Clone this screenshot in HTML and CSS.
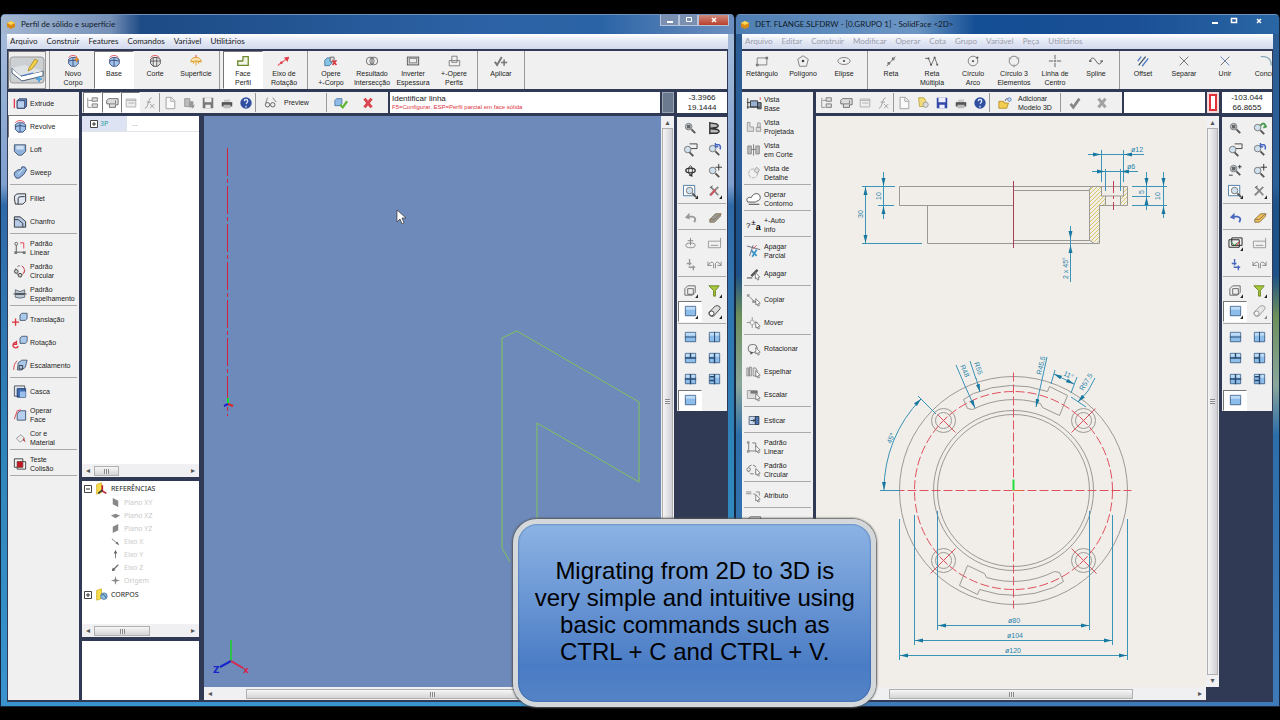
FILE: index.html
```html
<!DOCTYPE html>
<html lang="pt-BR">
<head>
  <meta charset="UTF-8" />
  <meta name="viewport" content="width=device-width, initial-scale=1.0" />
  <title>SolidFace</title>
  <link rel="stylesheet" href="styles.css">
</head>
<body>
  <svg class="sprite" aria-hidden="true">
    <!-- solid features -->
    <symbol id="body" viewBox="0 0 16 16"><path d="M3 6l3-2h5l3 2v5l-3 3H6l-3-3z" fill="#9fc3ec" stroke="#3b4c74"/><path d="M8 5v9M3 8l5-1 6 1" fill="none" stroke="#3b4c74"/><path d="M3 4c2-3 8-3 10 0" fill="none" stroke="#e0404e"/></symbol>
    <symbol id="newbody" viewBox="0 0 16 16"><use href="#body"/><path d="M12 3l1 2 2 1-2 1-1 3-1-3-2-1 2-1z" fill="#ee8e25"/></symbol>
    <symbol id="cut" viewBox="0 0 16 16"><path d="M3 6l3-2h5l3 2v5l-3 3H6l-3-3z" fill="#e8e8ea" stroke="#444"/><path d="M6 4v10M10 4v10M3 8h11" fill="none" stroke="#555"/><path d="M3 4c2-3 8-3 10 0" fill="none" stroke="#e0404e"/></symbol>
    <symbol id="surface" viewBox="0 0 16 16"><path d="M2 9c0-7 12-7 12 0l-3-1v3M8 8v5M5 8v3M2 9l6-1 6 1" fill="#fbe3b0" stroke="#d99a2b"/><path d="M8 1v3" stroke="#e0404e"/></symbol>
    <symbol id="face" viewBox="0 0 16 16"><path d="M8 3h6v10H2V8h5q1 0 1-1z" fill="#f3f6e6" stroke="#6f8b2e" stroke-width="1.5"/></symbol>
    <symbol id="axis" viewBox="0 0 16 16"><path d="M1 13L13 4" stroke="#e77" stroke-width="1.5"/><path d="M14 3L8 4l4 5z" fill="#e03b48"/><circle cx="5" cy="10" r="1.5" fill="#e03b48"/></symbol>
    <symbol id="opbody" viewBox="0 0 18 16"><path d="M1 7l3-3h6v7l-3 3H1z" fill="#86c3e4" stroke="#3b6a94"/><path d="M8 3h5v6H8z" fill="#ddd" stroke="#555"/><path d="M11 7l5 6m0-6l-5 6" stroke="#d9343f" stroke-width="2"/></symbol>
    <symbol id="inter" viewBox="0 0 16 16"><circle cx="6" cy="8" r="4.500" fill="none" stroke="#666"/><circle cx="10" cy="8" r="4.500" fill="none" stroke="#666"/><path d="M8 4v8" stroke="#444"/></symbol>
    <symbol id="thick" viewBox="0 0 16 16"><rect x="1.500" y="3.500" width="13" height="9" fill="#ccc" stroke="#555"/><rect x="4" y="5" width="8" height="5" fill="#eee" stroke="#888"/></symbol>
    <symbol id="opperf" viewBox="0 0 16 16"><path d="M5.500 2.500h6v7h-6z M2.500 7.500h12v6h-12z" fill="none" stroke="#777"/></symbol>
    <symbol id="apply" viewBox="0 0 18 16"><path d="M1 9l3 4 6-10" fill="none" stroke="#777" stroke-width="2.500"/><path d="M13 6v8M9 10h8" stroke="#777" stroke-width="2"/></symbol>
    <symbol id="extrude" viewBox="0 0 16 16"><path d="M5 5l2-2h8v8l-2 2H5z" fill="#6f8fc4" stroke="#33456d"/><path d="M5 5h8v8H5z" fill="#b6d0f0" stroke="#33456d"/><path d="M2 13V3" stroke="#e0404e" stroke-width="1.500"/></symbol>
    <symbol id="loft" viewBox="0 0 16 16"><path d="M2 3h12v7l-4 4H6l-4-4z" fill="#8fb2da" stroke="#4a5872"/><path d="M4 4h8v4H4z" fill="#cfe0f4"/></symbol>
    <symbol id="sweep" viewBox="0 0 16 16"><path d="M2 8l4-3h3l1-3h3l2 3-3 5-5 4H4l-2-3z" fill="#8fb2da" stroke="#3b4c74"/><path d="M6 10l5-6" stroke="#e0eefb"/></symbol>
    <symbol id="fillet" viewBox="0 0 16 16"><path d="M2 8c0-5 3-5 6-5h6v8l-3 3H3z" fill="#dfe8f4" stroke="#333"/><path d="M6 14V8q0-2 3-2h4" fill="none" stroke="#333"/></symbol>
    <symbol id="chamfer" viewBox="0 0 16 16"><path d="M2 3h6l6 5v6H2z" fill="#b7cbe8" stroke="#333"/><path d="M2 6h4l5 4v4" fill="none" stroke="#333"/></symbol>
    <symbol id="plin" viewBox="0 0 16 16"><path d="M4 5v8h8" fill="none" stroke="#555"/><path d="M8 3h4v6" fill="none" stroke="#e0404e"/><path d="M2 12h3v3H2zM11 12h3v3h-3z" fill="#777"/><circle cx="4" cy="4" r="1.500" fill="#fff" stroke="#555"/></symbol>
    <symbol id="pcir" viewBox="0 0 16 16"><circle cx="8" cy="8" r="5" fill="none" stroke="#777" stroke-dasharray="3 2"/><path d="M10 3q5 4 1 9" fill="none" stroke="#e0404e"/><circle cx="4" cy="9" r="2" fill="#ccc" stroke="#444"/><circle cx="8" cy="13" r="2" fill="#ccc" stroke="#444"/></symbol>
    <symbol id="pmir" viewBox="0 0 16 16"><path d="M3 4l5 2 5-2v4H3zM3 9h10v3l-5 1-5-1z" fill="#b9c7d6" stroke="#66707c"/><path d="M1 8.500h14" stroke="#333"/></symbol>
    <symbol id="move3" viewBox="0 0 18 16"><path d="M9 3l2-2h6v6l-2 2H9z" fill="#a9c8ea" stroke="#4a5872"/><path d="M4 7v8M0 11h8" stroke="#d9343f" stroke-width="1.500"/></symbol>
    <symbol id="rot3" viewBox="0 0 18 16"><path d="M9 3l2-2h6v6l-2 2H9z" fill="#a9c8ea" stroke="#4a5872"/><path d="M5 8a3 3 0 1 0 2 4M5 6v4H2" fill="none" stroke="#d9343f" stroke-width="1.500"/></symbol>
    <symbol id="scale3" viewBox="0 0 18 16"><path d="M7 5l4-3h6l-2 8-4 3H6z" fill="#a9c8ea" stroke="#4a5872"/><path d="M8 8h4v4H8z" fill="none" stroke="#333"/><path d="M2 13q0-8 4-10" fill="none" stroke="#d9343f"/></symbol>
    <symbol id="shell" viewBox="0 0 16 16"><path d="M2 2h11v11H2z" fill="#d9e3f2" stroke="#555"/><path d="M5 5h9v9H5z" fill="#3f6fb4" stroke="#223a66"/><path d="M8 8h6v6H8z" fill="#9cc0ec"/></symbol>
    <symbol id="opface" viewBox="0 0 16 16"><path d="M5 14V8q1-4 4-4h5v10z" fill="#b8d0f0" stroke="#4a5872"/><path d="M2 13L5 4l4-1" fill="none" stroke="#e0404e"/></symbol>
    <symbol id="color" viewBox="0 0 16 16"><path d="M4 9l5-4 4 4-5 4z" fill="#ececec" stroke="#999"/><path d="M12 8l2 5-3-2z" fill="#b03a44"/></symbol>
    <symbol id="collide" viewBox="0 0 16 16"><path d="M2 3h9v9H2zM5 6h9v8H5z" fill="none" stroke="#444"/><path d="M5 6h6v6H5z" fill="#c01822"/></symbol>
    <!-- 2D drawing -->
    <symbol id="arrow" viewBox="0 0 16 16"><path d="M10 7l5 5-2 .500 1 2.500-1.500.500-1-2.500-1.500 1z" fill="#fff" stroke="#777"/></symbol>
    <symbol id="rect" viewBox="0 0 16 16"><path d="M2.500 4.500h11v8h-11z" fill="none" stroke="#777"/><path d="M1 11h3v3H1zM12 3h3v3h-3z" fill="#777"/></symbol>
    <symbol id="poly" viewBox="0 0 16 16"><path d="M8 2l6 4-2 8H4L2 6z" fill="none" stroke="#777"/><circle cx="8" cy="8" r="1.500" fill="#444"/></symbol>
    <symbol id="ell" viewBox="0 0 16 16"><ellipse cx="8" cy="8" rx="7" ry="4" fill="none" stroke="#777"/><circle cx="8" cy="8" r="1.200" fill="#444"/></symbol>
    <symbol id="line" viewBox="0 0 16 16"><path d="M3 14L13 3" stroke="#666"/><path d="M4 9h3v3H4zM9 4h3v3H9z" fill="#777"/></symbol>
    <symbol id="pline" viewBox="0 0 16 16"><path d="M0 5h4l3 8 4-9 3 8" fill="none" stroke="#666"/><path d="M3 4h2v2H3zM10 3h2v2h-2zM6 11h2v2H6zM13 11h2v2h-2z" fill="#555"/></symbol>
    <symbol id="circ" viewBox="0 0 16 16"><circle cx="8" cy="8" r="5.500" fill="none" stroke="#777"/><path d="M7 7h2v2H7zM12 3h2v2h-2z" fill="#444"/></symbol>
    <symbol id="circ3" viewBox="0 0 16 16"><circle cx="8" cy="8" r="5.500" fill="none" stroke="#777"/><path d="M2 4h3v2H2zM11 4h3v2h-3zM7 12h2v3H7z" fill="#aaa"/></symbol>
    <symbol id="center" viewBox="0 0 16 16"><path d="M8 1v14M1 8h14" stroke="#555" stroke-dasharray="5 1 2 1"/></symbol>
    <symbol id="spline" viewBox="0 0 16 16"><path d="M1 8q3-7 7 0t7 0" fill="none" stroke="#555"/><path d="M0 7h3v2H0zM13 7h3v2h-3z" fill="#777"/></symbol>
    <symbol id="offset" viewBox="0 0 16 16"><path d="M3 13L11 3" stroke="#456" stroke-width="1.500"/><path d="M7 14l7-9M2 8l4-5" stroke="#4b7cc6" stroke-width="1.500"/></symbol>
    <symbol id="cross" viewBox="0 0 16 16"><path d="M3 3l10 10M13 3L3 13" stroke="#666"/></symbol>
    <symbol id="join" viewBox="0 0 16 16"><path d="M3 3l10 10" stroke="#4b7cc6"/><path d="M13 3L3 13" stroke="#666"/></symbol>
    <symbol id="concord" viewBox="0 0 16 16"><path d="M2 3h4q8 1 8 10" fill="none" stroke="#8ab" stroke-width="1.500"/></symbol>
    <symbol id="vbase" viewBox="0 0 18 16"><path d="M2 2v12M1 7h4M5 5h8v7H5z" fill="#9ab0d0" stroke="#333"/><path d="M13 7h4v7h-4zM1 12h15" fill="#789" stroke="#333"/><path d="M16 1v3" stroke="#e0404e"/></symbol>
    <symbol id="vproj" viewBox="0 0 18 16"><path d="M1.500 3.500h3v5h4v5h-7zM11.500 9h5v4.500h-5zM13 4h3v5h-3z" fill="#ddd" stroke="#999"/></symbol>
    <symbol id="vcut" viewBox="0 0 18 16"><path d="M2 4h4v9H2zM11 4h4v9h-4z" fill="#bbb" stroke="#888"/><path d="M8.500 2v13M6 8h5" stroke="#777"/></symbol>
    <symbol id="vdet" viewBox="0 0 18 16"><circle cx="8" cy="9" r="5" fill="none" stroke="#aaa" stroke-dasharray="4 1"/><path d="M9 6l3-4 3 3-2 4z" fill="#ddd" stroke="#999"/></symbol>
    <symbol id="contour" viewBox="0 0 18 16"><path d="M2 12c-3-4 1-6 4-5 2-6 10-6 10 0 0 4-4 3-5 5z" fill="#fff" stroke="#444"/><path d="M3 14.500h12" stroke="#333"/></symbol>
    <symbol id="partial" viewBox="0 0 18 16"><path d="M1 3l15 4M4 14l4-12" stroke="#667"/><path d="M6 8l6 6M12 7l-5 8" stroke="#3b93c8" stroke-width="2"/><path d="M8 6l4-4" stroke="#e0404e"/></symbol>
    <symbol id="erase" viewBox="0 0 18 16"><path d="M5 10l7-7 2 2-7 7z" fill="#555"/><path d="M1 13h6" stroke="#333"/><use href="#arrow" width="17" height="16"/></symbol>
    <symbol id="copy2" viewBox="0 0 18 16"><path d="M1 2h3v3H1zM7 9h5v3H7z" fill="#999"/><path d="M4 5l5 5" stroke="#777"/><use href="#arrow" width="18" height="16"/></symbol>
    <symbol id="move2" viewBox="0 0 18 16"><path d="M7 2v12M1 8h12" stroke="#888"/><path d="M5 6h4v4H5z" fill="#fff" stroke="#aaa"/><use href="#arrow" width="18" height="16"/></symbol>
    <symbol id="rot2" viewBox="0 0 18 16"><rect x="2.500" y="3.500" width="10" height="9" rx="4" fill="none" stroke="#666"/><path d="M5 11l3 2-3 2z" fill="#555"/><use href="#arrow" width="18" height="16"/></symbol>
    <symbol id="mir2" viewBox="0 0 18 16"><path d="M1 4h2v9H1zM4 3h2v10H4zM8 4h3l2 4v5H8z" fill="#ddd" stroke="#888"/><use href="#arrow" width="18" height="16"/></symbol>
    <symbol id="scale2" viewBox="0 0 18 16"><path d="M1.500 3.500h11v9h-11z" fill="#ddd" stroke="#999"/><path d="M5 4h8v3H5z" fill="#777"/><use href="#arrow" width="18" height="16"/></symbol>
    <symbol id="stretch" viewBox="0 0 18 16"><path d="M3.500 3.500h7v9h-7z" fill="#cfdcf0" stroke="#567"/><path d="M10.500 3.500h4v9h-4z" fill="#4b74b8" stroke="#234"/><path d="M5 8h5M8 6l2 2-2 2" fill="none" stroke="#234"/></symbol>
    <symbol id="plin2" viewBox="0 0 18 16"><path d="M3 4v9h9M7 4h4v5" fill="none" stroke="#777"/><path d="M1 2h3v3H1zM1 12h3v3H1z" fill="#999"/><use href="#arrow" width="18" height="16"/></symbol>
    <symbol id="pcir2" viewBox="0 0 18 16"><circle cx="7" cy="8" r="5" fill="none" stroke="#666" stroke-dasharray="4 2"/><circle cx="3" cy="8" r="2" fill="#eee" stroke="#777"/><use href="#arrow" width="18" height="16"/></symbol>
    <symbol id="attr" viewBox="0 0 18 16"><path d="M0 4h6M0 6h6M8 6l3 1M11 4h4v4" fill="none" stroke="#888"/><use href="#arrow" width="18" height="16"/></symbol>
    <!-- file bar -->
    <symbol id="tree" viewBox="0 0 16 16"><path d="M2 2v11h4M3 5h4" fill="none" stroke="#888"/><path d="M7 2h6v4H7zM7 9h6v4H7z" fill="#ddd" stroke="#777"/></symbol>
    <symbol id="group" viewBox="0 0 16 16"><path d="M4 3h11v7h-3v3H5V9H2V5z" fill="#ddd" stroke="#666"/><path d="M5 9h7V5" fill="none" stroke="#777"/></symbol>
    <symbol id="form" viewBox="0 0 16 16"><path d="M2.500 3.500h11v9h-11z" fill="#eee" stroke="#aaa"/><path d="M3 5h11M5 8h7" stroke="#aaa"/></symbol>
    <symbol id="fx" viewBox="0 0 16 16"><path d="M2 14q3 0 4-6t4-6M4 7h5M8 9l5 5M13 9l-5 5" fill="none" stroke="#999"/></symbol>
    <symbol id="new" viewBox="0 0 16 16"><path d="M3.500 1.500h6l4 4v9h-10z" fill="#fafafa" stroke="#999"/><path d="M9 2v4h4" fill="none" stroke="#999"/></symbol>
    <symbol id="open" viewBox="0 0 16 16"><path d="M3 3h6v9H3z" fill="#bbb" stroke="#999"/><path d="M8 6h5v7H8z" fill="#999"/><path d="M12 14l2-4" stroke="#777"/></symbol>
    <symbol id="openy" viewBox="0 0 16 16"><path d="M3 2h6l2 3v7H4z" fill="#f0dc7c" stroke="#bda545"/><circle cx="11" cy="10" r="3" fill="#ddd" stroke="#999"/></symbol>
    <symbol id="save" viewBox="0 0 16 16"><path d="M2 2h12v12H2z" fill="#777"/><path d="M4 2h8v5H4zM5 10h6v4H5z" fill="#eee"/></symbol>
    <symbol id="saveb" viewBox="0 0 16 16"><path d="M2 2h12v12H2z" fill="#3249a8"/><path d="M4 2h8v5H4zM5 10h6v4H5z" fill="#eef"/></symbol>
    <symbol id="print" viewBox="0 0 16 16"><path d="M5 4h7l-1 3H4z" fill="#ccc"/><path d="M2 7h12v5H2z" fill="#555"/><path d="M4 10h8v4H4z" fill="#bbb"/></symbol>
    <symbol id="help" viewBox="0 0 16 16"><circle cx="8" cy="8" r="6.500" fill="#314f9f"/><path d="M6 6q0-2 2-2t2 2q0 1-2 3M8 11v2" fill="none" stroke="#dbe6ff" stroke-width="1.500"/></symbol>
    <symbol id="glasses" viewBox="0 0 16 16"><path d="M4 2L2 8M10 2l4 5" stroke="#777"/><circle cx="4" cy="10" r="2.500" fill="none" stroke="#555"/><circle cx="10" cy="10" r="2.500" fill="none" stroke="#555"/></symbol>
    <symbol id="okbody" viewBox="0 0 16 16"><path d="M1 5l2-2h6v6l-2 2H1z" fill="#8fbbe6" stroke="#4f79a8"/><path d="M7 10l3 3 5-7" fill="none" stroke="#5fb531" stroke-width="2.500"/></symbol>
    <symbol id="no" viewBox="0 0 16 16"><path d="M4 3l8 10M12 3L4 13" stroke="currentColor" stroke-width="3.500"/></symbol>
    <symbol id="yes" viewBox="0 0 16 16"><path d="M3 9l3 4 7-10" fill="none" stroke="#858585" stroke-width="3"/></symbol>
    <symbol id="folder3d" viewBox="0 0 16 16"><path d="M1 6h5l1 2h5l-2 6H1z" fill="#f2cd4f" stroke="#b8902a"/><path d="M8 6q1-4 3-3" fill="none" stroke="#555"/><circle cx="13" cy="4" r="2" fill="#cde" stroke="#4b7cc6"/></symbol>
    <!-- view bar -->
    <symbol id="mag" viewBox="0 0 16 16"><circle cx="6" cy="6" r="3.500" fill="#cfe0ee" stroke="#777"/><path d="M9 9l4 4" stroke="#555" stroke-width="2"/></symbol>
    <symbol id="magd" viewBox="0 0 16 16"><use href="#mag"/><path d="M4 4h4v4H4z" fill="#666"/></symbol>
    <symbol id="magdyn" viewBox="0 0 16 16"><use href="#magd"/><path d="M12.500 2v4M10.500 4h4M1 13h4" stroke="#333"/></symbol>
    <symbol id="solidv" viewBox="0 0 16 16"><path d="M3 1v13M3 2l7 1q4 2 0 4l-7 1M3 8l8 1q4 2 0 4H3" fill="#bbb" stroke="#333" stroke-width="1.500"/></symbol>
    <symbol id="magw" viewBox="0 0 16 16"><path d="M7 2h8v5H8" fill="none" stroke="#444"/><circle cx="5" cy="8" r="3.500" fill="#cfe0ee" stroke="#777"/><path d="M7 11l4 4" stroke="#555" stroke-width="2"/></symbol>
    <symbol id="magu" viewBox="0 0 16 16"><use href="#mag" y="1"/><path d="M9 3h4q2 1 1 5M9 1v4h3" fill="none" stroke="#4666c4" stroke-width="1.500"/></symbol>
    <symbol id="magg" viewBox="0 0 16 16"><use href="#mag" y="1"/><path d="M9 5q2-3 4-2l2 3-3 1" fill="none" stroke="#4b9b52" stroke-width="2"/></symbol>
    <symbol id="orbit" viewBox="0 0 16 16"><ellipse cx="8" cy="8" rx="5" ry="2.500" fill="none" stroke="#333" stroke-width="1.500"/><ellipse cx="8" cy="8" rx="2" ry="5" fill="none" stroke="#333"/><path d="M6 13l4-2v4z" fill="#333"/></symbol>
    <symbol id="magp" viewBox="0 0 16 16"><use href="#mag" y="2"/><path d="M12.500 1v7M9 4.500h7" stroke="#333"/></symbol>
    <symbol id="magf" viewBox="0 0 16 16"><path d="M.500 1.500h12v11h-12z" fill="#fff" stroke="#4a7ba8"/><use href="#mag" x="1" y="1"/><path d="M16 12v4h-3z" fill="#222"/></symbol>
    <symbol id="tools" viewBox="0 0 16 16"><path d="M4 3l8 9M12 3L3 12" stroke="#888" stroke-width="2"/><path d="M3 4l3-2" stroke="#555"/><path d="M16 12v4h-3z" fill="#222"/></symbol>
    <symbol id="toolsr" viewBox="0 0 16 16"><use href="#tools"/><path d="M4 12l5-6" stroke="#d8505a" stroke-width="2"/></symbol>
    <symbol id="undo" viewBox="0 0 16 16"><path d="M4 7h6q5 1 2 6" fill="none" stroke="currentColor" stroke-width="2"/><path d="M7 3v7L2 8z" fill="currentColor"/></symbol>
    <symbol id="eraser" viewBox="0 0 16 16"><path d="M3 10l6-6h6l-1 3-6 6H3z" fill="currentColor" stroke="#8a7a55"/><path d="M3 10h5l6-6" fill="none" stroke="#8a7a55"/></symbol>
    <symbol id="plane" viewBox="0 0 16 16"><path d="M8 2v8M5 5h6" stroke="#888"/><ellipse cx="8" cy="10" rx="5" ry="2.500" fill="none" stroke="#888"/></symbol>
    <symbol id="layers" viewBox="0 0 16 16"><path d="M4 2h11v8H4zM1 4h11v8H1z" fill="#eee" stroke="#222"/><path d="M3 6l4 4 3-3" fill="none" stroke="#2a8a3a"/><path d="M9 10l3-4" stroke="#d22"/><path d="M16 12v4h-3z" fill="#222"/></symbol>
    <symbol id="dim" viewBox="0 0 16 16"><path d="M1.500 5.500h13v7h-13zM4 10h8M14.500 2v4" fill="none" stroke="#999"/></symbol>
    <symbol id="snap" viewBox="0 0 16 16"><path d="M7 2v7M4 7h5M6 11h7M11 9v5" stroke="currentColor" stroke-width="1.500"/></symbol>
    <symbol id="curves" viewBox="0 0 16 16"><path d="M1 5v4h4M1 9q4-6 6-2v5M15 5v4h-4M15 9q-4-6-6-2v5" fill="none" stroke="#888"/></symbol>
    <symbol id="wire" viewBox="0 0 16 16"><path d="M2 6l3-3h8v7l-3 3H2zM5 6h6v6H5z" fill="none" stroke="#666"/><path d="M16 12v4h-3z" fill="#222"/></symbol>
    <symbol id="funnel" viewBox="0 0 16 16"><path d="M2 3h11L9 8v6H7V8z" fill="#a9c93c" stroke="#6d8523"/><path d="M16 12v4h-3z" fill="#222"/></symbol>
    <symbol id="pane" viewBox="0 0 16 16"><path d="M2.500 2.500h11v10h-11z" fill="#8dbdeb" stroke="#44658c"/><path d="M3 3h10v3H3z" fill="#bfdcf6"/></symbol>
    <symbol id="paned" viewBox="0 0 16 16"><use href="#pane"/><path d="M16 12v4h-3z" fill="#222"/></symbol>
    <symbol id="tube" viewBox="0 0 16 16"><path d="M2 9l7-7q5-1 5 3l-7 8q-5 1-5-4z" fill="#ddd" stroke="#444"/><ellipse cx="5" cy="10" rx="2.500" ry="2.500" fill="#fff" stroke="#444"/><path d="M16 12v4h-3z" fill="#222"/></symbol>
    <symbol id="ph" viewBox="0 0 16 16"><use href="#pane"/><path d="M2 7.500h12" stroke="#27496f"/></symbol>
    <symbol id="pv" viewBox="0 0 16 16"><use href="#pane"/><path d="M8 2v11" stroke="#27496f"/></symbol>
    <symbol id="pt" viewBox="0 0 16 16"><use href="#pane"/><path d="M2 7.500h12M8 2v5" stroke="#27496f" stroke-width="1.500"/></symbol>
    <symbol id="pl" viewBox="0 0 16 16"><use href="#pane"/><path d="M8 2v11M2 7.500h6" stroke="#27496f" stroke-width="1.500"/></symbol>
    <symbol id="pq" viewBox="0 0 16 16"><use href="#pane"/><path d="M8 2v11M2 7.500h12" stroke="#27496f" stroke-width="1.500"/></symbol>
    <symbol id="ptr" viewBox="0 0 16 16"><use href="#pane"/><path d="M8 2v11M3 5h5M3 9h5" stroke="#27496f" stroke-width="1.500"/></symbol>
    <!-- tree -->
    <symbol id="plus" viewBox="0 0 8 8"><path d="M.500.500h7v7h-7z" fill="#fff" stroke="#444"/><path d="M4 2v4M2 4h4" stroke="#333"/></symbol>
    <symbol id="minus" viewBox="0 0 8 8"><path d="M.500.500h7v7h-7z" fill="#fff" stroke="#444"/><path d="M2 4h4" stroke="#333"/></symbol>
    <symbol id="fref" viewBox="0 0 16 16"><path d="M2 3l6-2v12l-6 2z" fill="#f7dd4a" stroke="#d2b12d"/><path d="M9 4v7M9 11l5 3" stroke="#b23" stroke-width="2"/><path d="M4 14l5-4" stroke="#333" stroke-width="2"/></symbol>
    <symbol id="fbody" viewBox="0 0 16 16"><path d="M2 3l6-2v12l-6 2z" fill="#f7dd4a" stroke="#d2b12d"/><circle cx="11" cy="10" r="4" fill="#8dbde8" stroke="#47759f"/><path d="M8 9q4-3 5 3" fill="none" stroke="#356"/></symbol>
    <symbol id="pxy" viewBox="0 0 12 12"><path d="M3 1l6 3v7L3 8z" fill="#888"/></symbol>
    <symbol id="pxz" viewBox="0 0 12 12"><path d="M1 6l5-2 5 2-5 3z" fill="#888"/></symbol>
    <symbol id="pyz" viewBox="0 0 12 12"><path d="M3 4l6-3v7l-6 3z" fill="#888"/></symbol>
    <symbol id="ex" viewBox="0 0 12 12"><path d="M2 3l7 6" stroke="#777"/><path d="M6 8l4 2-2-4z" fill="#666"/></symbol>
    <symbol id="ey" viewBox="0 0 12 12"><path d="M6 2v8" stroke="#777"/><path d="M4 5l2-4 2 4z" fill="#666"/></symbol>
    <symbol id="ez" viewBox="0 0 12 12"><path d="M9 3L3 9" stroke="#777" stroke-width="1.500"/><path d="M2 10l1-4 3 3z" fill="#666"/></symbol>
    <symbol id="eo" viewBox="0 0 12 12"><path d="M6 1l1 4 4 1-4 1-1 4-1-4-4-1 4-1z" fill="#888"/></symbol>
    <symbol id="logo" viewBox="0 0 10 10"><path d="M1 3l4-2 4 2v4L5 9 1 7z" fill="#d98a16"/><path d="M1 3l4-2 4 2-4 2z" fill="#ffd75a"/></symbol>
  </svg>

  <main class="desktop">
    <section class="window window-3d">
      <header class="titlebar">
        <svg class="logo"><use href="#logo"/></svg>
        <h1>Perfil de sólido e superfície</h1>
        <div class="winbtns active">
          <button aria-label="Minimizar"><svg viewBox="0 0 12 8"><path d="M3 5h6v2H3z" fill="#fff"/></svg></button>
          <button aria-label="Maximizar"><svg viewBox="0 0 12 8"><path d="M3.500 1.500h5v4h-5z" fill="none" stroke="#fff"/></svg></button>
          <button class="close" aria-label="Fechar"><svg viewBox="0 0 12 8"><path d="M4 2l4 4M8 2L4 6" stroke="#fff" stroke-width="1.500"/></svg></button>
        </div>
      </header>
      <nav class="menu">
        <a href="#">Arquivo</a><a href="#">Construir</a><a href="#">Features</a><a href="#">Comandos</a><a href="#">Variável</a><a href="#">Utilitários</a>
      </nav>
      <div class="client">
        <div class="ribbon">
          <button class="sketch" aria-label="Esboço">
            <svg viewBox="0 0 36 28"><rect x="1" y="1" width="34" height="26" rx="3" fill="#cdd0d2" stroke="#999"/><path d="M3 12l9 8 22-5v5l-21 5-10-8z" fill="#fff" stroke="#4b5f78"/><path d="M3 12l12-3 19 6-22 5z" fill="#dfe3e6"/><path d="M20 12l6-9 3 2-6 8-4 2z" fill="#f0d04a" stroke="#b79a30"/><path d="M12 20l12-3" stroke="#3b6fc0"/><path d="M30 20v6M27 23h6" stroke="#58a7dd" stroke-width="2"/></svg>
          </button>
          <span class="vsep"></span>
          <button class="tool"><svg><use href="#newbody"/></svg>Novo<br>Corpo</button>
          <button class="tool pressed"><svg><use href="#body"/></svg>Base</button>
          <button class="tool"><svg><use href="#cut"/></svg>Corte</button>
          <button class="tool"><svg><use href="#surface"/></svg>Superfície</button>
          <span class="vsep"></span>
          <button class="tool pressed"><svg><use href="#face"/></svg>Face<br>Perfil</button>
          <button class="tool"><svg><use href="#axis"/></svg>Eixo de<br>Rotação</button>
          <span class="vsep"></span>
          <button class="tool"><svg><use href="#opbody"/></svg>Opere<br>+-Corpo</button>
          <button class="tool"><svg><use href="#inter"/></svg>Resultado<br>Intersecção</button>
          <button class="tool"><svg><use href="#thick"/></svg>Inverter<br>Espessura</button>
          <button class="tool"><svg><use href="#opperf"/></svg>+-Opere<br>Perfis</button>
          <span class="vsep"></span>
          <button class="tool"><svg><use href="#apply"/></svg>Aplicar</button>
          <span class="vsep"></span>
        </div>
        <div class="work">
          <div class="side">
            <button><svg><use href="#extrude"/></svg>Extrude</button>
            <button class="pressed"><svg><use href="#body"/></svg>Revolve</button>
            <button><svg><use href="#loft"/></svg>Loft</button>
            <button><svg><use href="#sweep"/></svg>Sweep</button>
            <hr>
            <button><svg><use href="#fillet"/></svg>Fillet</button>
            <button><svg><use href="#chamfer"/></svg>Chanfro</button>
            <hr>
            <button><svg><use href="#plin"/></svg>Padrão<br>Linear</button>
            <button><svg><use href="#pcir"/></svg>Padrão<br>Circular</button>
            <button><svg><use href="#pmir"/></svg>Padrão<br>Espelhamento</button>
            <hr>
            <button><svg><use href="#move3"/></svg>Translação</button>
            <button><svg><use href="#rot3"/></svg>Rotação</button>
            <button><svg><use href="#scale3"/></svg>Escalamento</button>
            <hr>
            <button><svg><use href="#shell"/></svg>Casca</button>
            <button><svg><use href="#opface"/></svg>Operar<br>Face</button>
            <button><svg><use href="#color"/></svg>Cor e<br>Material</button>
            <hr>
            <button><svg><use href="#collide"/></svg>Teste<br>Colisão</button>
            <hr>
          </div>
          <div class="center">
            <div class="bar">
              <div class="filebar">
                <button class="pressed" aria-label="Árvore"><svg><use href="#tree"/></svg></button>
                <button class="pressed" aria-label="Grupos"><svg><use href="#group"/></svg></button>
                <button class="pressed" aria-label="Propriedades"><svg><use href="#form"/></svg></button>
                <button aria-label="Função"><svg><use href="#fx"/></svg></button>
                <span class="vsep"></span>
                <button aria-label="Novo"><svg><use href="#new"/></svg></button>
                <button aria-label="Abrir"><svg><use href="#open"/></svg></button>
                <button aria-label="Salvar"><svg><use href="#save"/></svg></button>
                <button aria-label="Imprimir"><svg><use href="#print"/></svg></button>
                <button aria-label="Ajuda"><svg><use href="#help"/></svg></button>
                <span class="vsep"></span>
                <button class="labelled"><svg><use href="#glasses"/></svg>Preview</button>
                <span class="vsep"></span>
                <button class="wide" aria-label="Confirmar"><svg><use href="#okbody"/></svg></button>
                <button class="wide red" aria-label="Cancelar"><svg><use href="#no"/></svg></button>
              </div>
              <div class="prompt"><p>Identificar linha</p><p class="hint">F5=Configurar, ESP=Perfil parcial em face sólida</p></div>
              <span class="busy"></span>
            </div>
            <div class="panes">
              <div class="trees">
                <div class="panel features">
                  <div class="row"><p class="node"><svg><use href="#plus"/></svg>3P</p><span class="dots">...</span></div>
                  <div class="hscroll"><i>◂</i><b class="thumb t1"></b><i>▸</i></div>
                </div>
                <div class="panel refs">
                  <ul>
                    <li class="head"><svg class="box"><use href="#minus"/></svg><svg class="dir"><use href="#fref"/></svg>REFERÊNCIAS</li>
                    <li><svg><use href="#pxy"/></svg>Plano XY</li>
                    <li><svg><use href="#pxz"/></svg>Plano XZ</li>
                    <li><svg><use href="#pyz"/></svg>Plano YZ</li>
                    <li><svg><use href="#ex"/></svg>Eixo X</li>
                    <li><svg><use href="#ey"/></svg>Eixo Y</li>
                    <li><svg><use href="#ez"/></svg>Eixo Z</li>
                    <li><svg><use href="#eo"/></svg>Origem</li>
                    <li class="head"><svg class="box"><use href="#plus"/></svg><svg class="dir"><use href="#fbody"/></svg>CORPOS</li>
                  </ul>
                  <div class="hscroll"><i>◂</i><b class="thumb t2"></b><i>▸</i></div>
                </div>
                <div class="panel info"></div>
              </div>
              <div class="view">
                <svg class="canvas model" viewBox="204 116 457 571" preserveAspectRatio="xMinYMin meet">
                  <path d="M227.500 148v268" stroke="#d0243c" stroke-dasharray="28 3 4 3"/>
                  <path d="M510 562l-8-14V338l15-7 122 71v80l-102-59v150" fill="none" stroke="#82c25c"/>
                  <path d="M228 404v-6" stroke="#1d3" stroke-width="2"/><path d="M228 404l5 2" stroke="#d22" stroke-width="2"/><path d="M228 404l-4 2" stroke="#22c" stroke-width="2"/>
                  <path d="M397 210v12l3-3 2 5 2-1-2-5h4z" fill="#fff" stroke="#333" stroke-width=".7"/>
                  <path d="M231 661v-21" stroke="#2fc04c" stroke-width="2"/>
                  <path d="M231 661l-11 6" stroke="#1626c8" stroke-width="2"/>
                  <path d="M231 661l12 7" stroke="#d8254a" stroke-width="2"/>
                  <text x="213" y="673" class="az">Z</text><text x="243" y="673" class="ax">x</text>
                </svg>
                <div class="vscroll"><i>▴</i><b class="thumb"></b><i>▾</i></div>
                <div class="hscroll"><i>◂</i><b class="thumb t3"></b><i>▸</i></div>
              </div>
            </div>
          </div>
          <div class="right">
            <output class="coords">-3.3966<br>19.1444</output>
            <div class="viewbar">
              <button aria-label="Zoom"><svg><use href="#magd"/></svg></button><button aria-label="Sólido"><svg><use href="#solidv"/></svg></button>
              <button aria-label="Zoom janela"><svg><use href="#magw"/></svg></button><button aria-label="Zoom anterior"><svg><use href="#magu"/></svg></button>
              <button aria-label="Orbitar"><svg><use href="#orbit"/></svg></button><button aria-label="Mover vista"><svg><use href="#magp"/></svg></button>
              <button aria-label="Zoom total"><svg><use href="#magf"/></svg></button><button aria-label="Ferramentas"><svg><use href="#toolsr"/></svg></button>
              <hr>
              <button class="dim" aria-label="Desfazer"><svg><use href="#undo"/></svg></button><button class="dim" aria-label="Limpar"><svg><use href="#eraser"/></svg></button>
              <hr>
              <button aria-label="Plano"><svg><use href="#plane"/></svg></button><button aria-label="Medir"><svg><use href="#dim"/></svg></button>
              <button class="dim" aria-label="Ponto"><svg><use href="#snap"/></svg></button><button aria-label="Curvas"><svg><use href="#curves"/></svg></button>
              <hr>
              <button aria-label="Arame"><svg><use href="#wire"/></svg></button><button aria-label="Filtro"><svg><use href="#funnel"/></svg></button>
              <button class="pressed" aria-label="Janela"><svg><use href="#paned"/></svg></button><button aria-label="Sombrear"><svg><use href="#tube"/></svg></button>
              <hr>
              <button aria-label="Dividir horizontal"><svg><use href="#ph"/></svg></button><button aria-label="Dividir vertical"><svg><use href="#pv"/></svg></button>
              <button aria-label="Três vistas"><svg><use href="#pt"/></svg></button><button aria-label="Três vistas à esquerda"><svg><use href="#pl"/></svg></button>
              <button aria-label="Quatro vistas"><svg><use href="#pq"/></svg></button><button aria-label="Quatro vistas à esquerda"><svg><use href="#ptr"/></svg></button>
              <button class="pressed" aria-label="Vista única"><svg><use href="#pane"/></svg></button>
            </div>
          </div>
        </div>
      </div>
    </section>

    <section class="window window-2d">
      <header class="titlebar">
        <svg class="logo"><use href="#logo"/></svg>
        <h1>DET. FLANGE.SLFDRW - [0.GRUPO 1] - SolidFace &lt;2D&gt;</h1>
        <div class="winbtns">
          <button aria-label="Minimizar"><svg viewBox="0 0 12 8"><path d="M3 5h6v2H3z" fill="#fff"/></svg></button>
          <button aria-label="Maximizar"><svg viewBox="0 0 12 8"><path d="M3.500 1.500h5v4h-5z" fill="none" stroke="#fff" stroke-width="1.500"/></svg></button>
          <button class="close" aria-label="Fechar"><svg viewBox="0 0 12 8"><path d="M4 2l4 4M8 2L4 6" stroke="#fff" stroke-width="1.500"/></svg></button>
        </div>
      </header>
      <nav class="menu muted">
        <a href="#">Arquivo</a><a href="#">Editar</a><a href="#">Construir</a><a href="#">Modificar</a><a href="#">Operar</a><a href="#">Cota</a><a href="#">Grupo</a><a href="#">Variável</a><a href="#">Peça</a><a href="#">Utilitários</a>
      </nav>
      <div class="client">
        <div class="ribbon">
          <button class="tool"><svg><use href="#rect"/></svg>Retângulo</button>
          <button class="tool"><svg><use href="#poly"/></svg>Polígono</button>
          <button class="tool"><svg><use href="#ell"/></svg>Elipse</button>
          <span class="vsep"></span>
          <button class="tool"><svg><use href="#line"/></svg>Reta</button>
          <button class="tool"><svg><use href="#pline"/></svg>Reta<br>Múltipla</button>
          <button class="tool"><svg><use href="#circ"/></svg>Círculo<br>Arco</button>
          <button class="tool"><svg><use href="#circ3"/></svg>Círculo 3<br>Elementos</button>
          <button class="tool"><svg><use href="#center"/></svg>Linha de<br>Centro</button>
          <button class="tool"><svg><use href="#spline"/></svg>Spline</button>
          <span class="vsep"></span>
          <button class="tool"><svg><use href="#offset"/></svg>Offset</button>
          <button class="tool"><svg><use href="#cross"/></svg>Separar</button>
          <button class="tool"><svg><use href="#join"/></svg>Unir</button>
          <button class="tool"><svg><use href="#concord"/></svg>Concor</button>
        </div>
        <div class="work">
          <div class="side">
            <button><svg><use href="#vbase"/></svg>Vista<br>Base</button>
            <button><svg><use href="#vproj"/></svg>Vista<br>Projetada</button>
            <button><svg><use href="#vcut"/></svg>Vista<br>em Corte</button>
            <button><svg><use href="#vdet"/></svg>Vista de<br>Detalhe</button>
            <hr>
            <button><svg><use href="#contour"/></svg>Operar<br>Contorno</button>
            <hr>
            <button><svg viewBox="0 0 18 16"><text x="0" y="12" font-size="9">?</text><text x="6" y="9" font-size="9">±</text><text x="11" y="14" font-size="10" font-weight="bold">a</text></svg>+-Auto<br>info</button>
            <hr>
            <button><svg><use href="#partial"/></svg>Apagar<br>Parcial</button>
            <button><svg><use href="#erase"/></svg>Apagar</button>
            <hr>
            <button><svg><use href="#copy2"/></svg>Copiar</button>
            <button><svg><use href="#move2"/></svg>Mover</button>
            <hr>
            <button><svg><use href="#rot2"/></svg>Rotacionar</button>
            <button><svg><use href="#mir2"/></svg>Espelhar</button>
            <button><svg><use href="#scale2"/></svg>Escalar</button>
            <hr>
            <button><svg><use href="#stretch"/></svg>Esticar</button>
            <hr>
            <button><svg><use href="#plin2"/></svg>Padrão<br>Linear</button>
            <button><svg><use href="#pcir2"/></svg>Padrão<br>Circular</button>
            <hr>
            <button><svg><use href="#attr"/></svg>Atributo</button>
            <hr>
            <button aria-label="Cota"><svg><use href="#group"/></svg></button>
          </div>
          <div class="center">
            <div class="bar">
              <div class="filebar">
                <button aria-label="Árvore"><svg><use href="#tree"/></svg></button>
                <button aria-label="Grupos"><svg><use href="#group"/></svg></button>
                <button aria-label="Propriedades"><svg><use href="#form"/></svg></button>
                <button aria-label="Função"><svg><use href="#fx"/></svg></button>
                <span class="vsep"></span>
                <button aria-label="Novo"><svg><use href="#new"/></svg></button>
                <button aria-label="Abrir"><svg><use href="#openy"/></svg></button>
                <button aria-label="Salvar"><svg><use href="#saveb"/></svg></button>
                <button aria-label="Imprimir"><svg><use href="#print"/></svg></button>
                <button aria-label="Ajuda"><svg><use href="#help"/></svg></button>
                <span class="vsep"></span>
                <button class="labelled"><svg><use href="#folder3d"/></svg><span>Adicionar<br>Modelo 3D</span></button>
                <span class="vsep"></span>
                <button class="wide" aria-label="Confirmar"><svg><use href="#yes"/></svg></button>
                <button class="wide gray" aria-label="Cancelar"><svg><use href="#no"/></svg></button>
              </div>
              <input class="prompt" type="text" aria-label="Comando">
              <span class="stop"></span>
            </div>
            <div class="panes">
              <div class="view">
                <svg class="canvas drawing" viewBox="816 116 390 571" preserveAspectRatio="xMinYMin meet">
                  <defs>
                    <marker id="tip" viewBox="0 0 8 6" refX="8" refY="3" markerWidth="8" markerHeight="6" orient="auto-start-reverse"><path d="M0 1l8 2-8 2z" fill="#17799f"/></marker>
                    <pattern id="hatch" width="4" height="4" patternUnits="userSpaceOnUse"><path d="M0 4l4-4" stroke="#d8c763"/></pattern>
                    <g id="hole"><circle r="12"/><circle r="8"/></g>
                    <path id="slot" d="M-50-91L-40-97A105 105 0 0 1 34-99L36-104 54-95 46-75 29-83 27-87A91.500 91.500 0 0 0-41-81L-46-82z"/>
                  </defs>
                  <!-- side section -->
                  <path d="M1090 187h11v9h4v9h-6v39l-10-4z" fill="url(#hatch)"/><path d="M1121 196h3v-9h4v18h-7z" fill="url(#hatch)"/>
                  <g class="part">
                    <path d="M1013 205.500H899.500V186.500H1127.500V205.500H1099.500V243.500H927.500V205.500M1013 190.500H1089.500V240.500H1013M1089 240l6 4M1089 190l3-4M1101.500 187v9h22v-9M1105.500 196v9M1120.500 196v9"/>
                  </g>
                  <path d="M1013.500 181v67" stroke="#a83c50"/><path d="M1113.500 181v12m0 3v3m0 3v8" stroke="#c33f53"/>
                  <g class="dims">
                    <path d="M862 186.500h33M862 243.500h60M878 205.500h16M1132 186.500h35M1132 205.500h35M1132 196.500h18M1101.500 150v32M1123.500 150v32M1105.500 169v22M1120.500 169v22M1096 154.500h48M1096 171.500h42M883.500 186v20M1146.500 186v20M1163.500 186v20M1070.500 226v56"/>
                    <path class="both" d="M865.500 187v56"/>
                    <g class="end">
                      <path d="M883.500 172v14"/><path d="M883.500 219v-13"/>
                      <path d="M1146.500 172v14"/><path d="M1146.500 210v-13"/>
                      <path d="M1163.500 172v14"/><path d="M1163.500 218v-12"/>
                      <path d="M1070.500 226v13"/><path d="M1070.500 258v-13"/>
                      <path d="M1088 154.500h13"/><path d="M1136 154.500h-12"/>
                      <path d="M1092 171.500h13"/><path d="M1134 171.500h-13"/>
                    </g>
                    <text x="1131" y="152">ø12</text><text x="1127" y="169">ø6</text>
                    <text transform="translate(863 218) rotate(-90)">30</text><text transform="translate(881 200) rotate(-90)">10</text>
                    <text transform="translate(1144 194) rotate(-90)">5</text><text transform="translate(1160 200) rotate(-90)">10</text>
                    <text transform="translate(1068 279) rotate(-90)">2 x 45°</text>
                  </g>
                  <!-- front view -->
                  <g transform="translate(1013.500 490.500)">
                    <g class="part"><circle r="114"/><circle r="80"/><circle r="76"/>
                      <use href="#hole" x="-70" y="-70"/><use href="#hole" x="70" y="-70"/><use href="#hole" x="-70" y="70"/><use href="#hole" x="70" y="70"/>
                      <use href="#slot"/><use href="#slot" transform="rotate(180)"/></g>
                    <g class="axes"><circle r="99"/><path d="M-118 0H118M0-118V118"/><path class="solid" d="M-58-58L-76-76M-66-74l-8 8M58-58L82-82M66-74l8 8M-58 58L-83 83M-66 74l-8-8M58 58L83 83M66 74l8-8"/></g>
                    <path d="M0 0v-11" stroke="#22e03a" stroke-width="2"/><path d="M0 0h9" stroke="#e0703a"/>
                  </g>
                  <g class="dims">
                    <path d="M937.500 511v119M1089.500 511v119M914.500 515v130M1112.500 515v130M899.500 519v141M1127.500 519v141M880 490.500h20M918 396l18 18M956 365l9 21M970 361l6 18M1051 384l4-14M1071 393l6-16M1071 397l15 10M1088 391l7-13"/>
                    <g class="both">
                      <path d="M938 625.500h151"/><path d="M915 640.500h197"/><path d="M900 655.500h227"/>
                      <path d="M884 490A130 130 0 0 1 921 399"/><path d="M1054 374l20 10"/>
                    </g>
                    <g class="end"><path d="M965 386l10 22"/><path d="M976 378l4 14"/><path d="M1047 357l-11 50"/><path d="M1088 391l-10 11"/></g>
                    <text x="1008" y="623">ø80</text><text x="1007" y="638">ø104</text><text x="1005" y="653">ø120</text>
                    <text transform="translate(891 444) rotate(-68)">45°</text><text transform="translate(960 366) rotate(66)">R48</text><text transform="translate(974 363) rotate(70)">R55</text>
                    <text transform="translate(1041 375) rotate(-76)">R45.5</text><text transform="translate(1063 375) rotate(26)">11°</text><text transform="translate(1083 391) rotate(-58)">R57.5</text>
                  </g>
                </svg>
                <div class="vscroll"><i>▴</i><b class="thumb"></b><i>▾</i></div>
                <div class="hscroll"><i>◂</i><b class="thumb t4"></b><i>▸</i></div>
              </div>
            </div>
          </div>
          <div class="right">
            <output class="coords">-103.044<br>66.8655</output>
            <div class="viewbar">
              <button aria-label="Zoom"><svg><use href="#magd"/></svg></button><button aria-label="Redesenhar"><svg><use href="#magg"/></svg></button>
              <button aria-label="Zoom janela"><svg><use href="#magw"/></svg></button><button aria-label="Zoom anterior"><svg><use href="#magu"/></svg></button>
              <button aria-label="Zoom dinâmico"><svg><use href="#magdyn"/></svg></button><button aria-label="Mover vista"><svg><use href="#magp"/></svg></button>
              <button aria-label="Zoom total"><svg><use href="#magf"/></svg></button><button aria-label="Ferramentas"><svg><use href="#tools"/></svg></button>
              <hr>
              <button class="blue" aria-label="Desfazer"><svg><use href="#undo"/></svg></button><button class="amber" aria-label="Limpar"><svg><use href="#eraser"/></svg></button>
              <hr>
              <button aria-label="Camadas"><svg><use href="#layers"/></svg></button><button aria-label="Medir"><svg><use href="#dim"/></svg></button>
              <button class="blue" aria-label="Ponto"><svg><use href="#snap"/></svg></button><button aria-label="Curvas"><svg><use href="#curves"/></svg></button>
              <hr>
              <button aria-label="Arame"><svg><use href="#wire"/></svg></button><button aria-label="Filtro"><svg><use href="#funnel"/></svg></button>
              <button class="pressed" aria-label="Janela"><svg><use href="#paned"/></svg></button><button class="faded" aria-label="Sombrear"><svg><use href="#tube"/></svg></button>
              <hr>
              <button aria-label="Dividir horizontal"><svg><use href="#ph"/></svg></button><button aria-label="Dividir vertical"><svg><use href="#pv"/></svg></button>
              <button aria-label="Três vistas"><svg><use href="#pt"/></svg></button><button aria-label="Três vistas à esquerda"><svg><use href="#pl"/></svg></button>
              <button aria-label="Quatro vistas"><svg><use href="#pq"/></svg></button><button aria-label="Quatro vistas à esquerda"><svg><use href="#ptr"/></svg></button>
              <button class="pressed" aria-label="Vista única"><svg><use href="#pane"/></svg></button>
            </div>
          </div>
        </div>
      </div>
    </section>

    <aside class="callout"><p>Migrating from 2D to 3D is very simple and intuitive using basic commands such as CTRL + C and CTRL + V.</p></aside>
  </main>
</body>
</html>
```
FILE: styles.css
```css
* {
  box-sizing: border-box;
}
body {
  margin: 0;
  background: #000;
  color: #222;
  font-family: "Liberation Sans", Arial, sans-serif;
  font-size: 7px;
  line-height: 9px;
}
p, h1, ul {
  margin: 0;
  padding: 0;
}
button {
  font: inherit;
  color: inherit;
  background: none;
  border: 1px solid transparent;
  padding: 0;
}
svg {
  display: block;
  flex: none;
}
.sprite {
  display: none;
}
.desktop {
  position: relative;
  display: grid;
  grid-template-columns: 735fr 545fr;
  height: 100vh;
  padding: 14px 0 13px;
}

/* windows */
.window {
  display: flex;
  flex-direction: column;
  min-width: 0;
  min-height: 0;
  padding: 0 6px 4px;
  border: 1px solid #16283f;
  border-top-color: #6d93bd;
  border-radius: 5px 5px 0 0;
}
.window-3d {
  background: linear-gradient(#a9bedb, #7f9fce 170px, #2f6aa8 190px, #2f86bb 450px, #3a93cf);
}
.window-2d {
  background: linear-gradient(#2c5c93, #2a5f9a 170px, #1e5187 190px, #1e5187 260px, #6c8f5a 300px, #8aa79c 370px, #2c6eaa 420px, #3f7ab8);
}
.titlebar {
  display: flex;
  align-items: center;
  gap: 5px;
  height: 19px;
  margin: 0 -6px;
  padding-left: 5px;
  border-radius: 4px 4px 0 0;
  background: linear-gradient(90deg, #a4b8d3, #7590b8 110px, #1d4b85 140px, #2c62a5 480px, #2b64a6 600px, #6d8fc0);
}
.window-2d .titlebar {
  padding-left: 4px;
  background: linear-gradient(90deg, #4f7fb4, #6c96c4 180px, #144e94 240px, #1b5096 400px, #2a66a4);
}
.logo {
  width: 10px;
  height: 10px;
}
h1 {
  flex: 1;
  font-family: Lato, "Open Sans", sans-serif;
  font-size: 8px;
  font-weight: 400;
  color: #101a28;
}
.winbtns {
  display: flex;
  align-self: flex-start;
  margin-right: 5px;
}
.winbtns button {
  width: 19px;
  height: 11px;
}
.winbtns svg {
  width: 12px;
  height: 8px;
  margin: 0 auto;
}
.winbtns .close {
  width: 31px;
}
.winbtns.active button {
  background: #7b90b0;
  border-color: #b5c4d8;
  border-top: 0;
}
.winbtns.active .close {
  background: linear-gradient(#d18a80, #b8402c);
}
.menu {
  display: flex;
  align-items: center;
  gap: 9px;
  height: 15px;
  padding-left: 3px;
  background: linear-gradient(#fff, #e3e8f5 50%, #d3daed);
  font-family: Lato, "Open Sans", sans-serif;
  font-size: 8px;
}
.menu a {
  color: #222;
  text-decoration: none;
}
.menu.muted a {
  color: #9a9dab;
}
.client {
  flex: 1;
  min-height: 0;
  display: flex;
  flex-direction: column;
  gap: 3px;
  padding: 2px 1px;
  background: #303a55;
}
.window-2d .client {
  padding-left: 0;
}

/* top toolbar */
.ribbon {
  display: flex;
  gap: 1px;
  height: 38px;
  overflow: hidden;
  background: #f0f0f0;
}
.tool {
  flex: none;
  width: 40px;
  padding-top: 2px;
  display: flex;
  flex-direction: column;
  align-items: center;
  white-space: nowrap;
}
.tool svg {
  width: 14px;
  height: 14px;
  margin-bottom: 1px;
}
.pressed {
  background: #fff;
  border-color: #777 #fff #fff #777;
}
.vsep {
  flex: none;
  width: 1px;
  margin: 0 2px;
  background: #999;
}
.sketch {
  width: 38px;
  border-color: #777 #999 #999 #777;
  background: #eee;
}
.sketch svg {
  width: 36px;
  height: 30px;
}

/* main area */
.work {
  flex: 1;
  min-height: 0;
  display: grid;
  grid-template-columns: 71px 1fr 50px;
  gap: 3px;
}
.side {
  min-height: 0;
  overflow: hidden;
  background: #f0f0f0;
}
.side button {
  display: flex;
  align-items: center;
  gap: 2px;
  width: 100%;
  height: 23px;
  padding-left: 3px;
  text-align: left;
  white-space: nowrap;
}
.side svg {
  width: 16px;
  height: 15px;
}
hr {
  margin: 0 2px 2px;
  border: 0;
  border-top: 1px solid #aaa;
}
.center {
  min-width: 0;
  min-height: 0;
  display: flex;
  flex-direction: column;
  gap: 3px;
}
.bar {
  display: flex;
  gap: 2px;
  height: 21px;
}
.filebar {
  flex: none;
  display: flex;
  width: 306px;
  padding-left: 1px;
  background: #f0f0f0;
}
.filebar button {
  width: 19px;
  display: flex;
  align-items: center;
  justify-content: center;
}
.filebar svg {
  width: 14px;
  height: 14px;
}
.filebar .vsep {
  margin: 1px 0;
}
.filebar .labelled {
  width: 70px;
  justify-content: flex-start;
  gap: 6px;
  padding-left: 7px;
  text-align: left;
}
.filebar .wide {
  width: 27px;
}
.red {
  color: #dc4550;
}
.gray {
  color: #a2a2a2;
}
.prompt {
  flex: 1;
  min-width: 0;
  padding: 2px;
  border: 0;
  background: #fff;
  font-size: 8px;
}
.prompt .hint {
  font-size: 6px;
  color: #e0323c;
}
.busy {
  width: 12px;
  border: 1px solid #9aa3b0;
  background: #6c7a90;
}
.stop {
  width: 12px;
  border: 2px solid #f7dada;
  outline: 2px solid #e03038;
  outline-offset: -4px;
  background: #fff;
}
.panes {
  flex: 1;
  min-height: 0;
  display: flex;
  gap: 5px;
}
.trees {
  flex: none;
  width: 117px;
  display: flex;
  flex-direction: column;
  gap: 4px;
}
.panel {
  display: flex;
  flex-direction: column;
  background: #fff;
  font-family: "Noto Sans", sans-serif;
  font-size: 7px;
}
.panel .hscroll {
  margin-top: auto;
}
.features {
  flex: 1;
}
.row {
  display: flex;
  gap: 5px;
  height: 16px;
  border-bottom: 1px solid #e3e3ec;
}
.node {
  display: flex;
  align-items: center;
  gap: 2px;
  width: 45px;
  padding-left: 8px;
  background: #dde3f3;
  color: #2a9ba0;
}
.node svg {
  width: 8px;
  height: 8px;
}
.dots {
  align-self: center;
  color: #aaa;
}
.refs {
  height: 156px;
}
.refs ul {
  list-style: none;
}
.refs li {
  display: flex;
  align-items: center;
  gap: 3px;
  height: 13px;
  padding-left: 28px;
  color: #c9c9c9;
}
.refs li svg {
  width: 11px;
  height: 11px;
}
.refs li.head {
  height: 15px;
  padding-left: 2px;
  color: #222;
}
.refs li .box {
  width: 8px;
  height: 8px;
}
.refs li .dir {
  width: 13px;
  height: 13px;
}
.info {
  height: 59px;
}

/* viewport */
.view {
  flex: 1;
  min-width: 0;
  display: grid;
  grid-template-columns: 1fr 13px;
  grid-template-rows: 1fr 13px;
}
.canvas {
  width: 100%;
  height: 100%;
  min-height: 0;
}
.model {
  background: #6e8aba;
}
.drawing {
  background: #f1eee9;
}
.az, .ax {
  font-family: "DejaVu Sans", sans-serif;
  font-size: 9px;
  font-weight: 700;
  fill: #1626c8;
}
.ax {
  fill: #d8254a;
}
.hscroll, .vscroll {
  display: flex;
  align-items: center;
  background: #f0f0f2;
  color: #555;
  font-size: 8px;
}
.hscroll {
  height: 13px;
  justify-content: space-between;
  padding: 0 4px;
}
.vscroll {
  flex-direction: column;
  padding: 2px 0;
  gap: 1px;
}
.hscroll i, .vscroll i {
  font-style: normal;
  font-family: "DejaVu Sans", sans-serif;
}
.thumb {
  border: 1px solid #b0b0b0;
  background: linear-gradient(#f6f6f6, #d5d5d7);
}
.thumb::after {
  content: "";
  display: block;
  width: 5px;
  height: 5px;
  margin: 2px auto;
  background: repeating-linear-gradient(90deg, #888 0 1px, #eee 1px 2px);
}
.hscroll .thumb {
  height: 10px;
}
.vscroll .thumb {
  flex: 1;
  width: 11px;
  display: flex;
  align-items: center;
  background: linear-gradient(90deg, #f6f6f6, #cfcfd6);
}
.vscroll .thumb::after {
  background: repeating-linear-gradient(#888 0 1px, #eee 1px 2px);
}
.t1 {
  width: 25px;
  margin-right: auto;
  margin-left: 4px;
}
.t2 {
  width: 56px;
  margin-right: auto;
  margin-left: 4px;
}
.t3 {
  width: 83%;
}
.t4 {
  width: 64%;
}
.part {
  fill: none;
  stroke: #9b9995;
}
.axes {
  fill: none;
  stroke: #e05060;
  stroke-dasharray: 9 3;
}
.axes .solid {
  stroke-dasharray: none;
}
.dims {
  fill: none;
  stroke: #3b93b8;
}
.dims text {
  fill: #1f83ab;
  stroke: none;
  font-size: 7px;
}
.both, .both path {
  marker-start: url(#tip);
  marker-end: url(#tip);
}
.end path {
  marker-end: url(#tip);
}

/* right column */
.right {
  display: flex;
  flex-direction: column;
  gap: 4px;
}
.coords {
  height: 21px;
  padding-top: 1px;
  background: #fff;
  text-align: center;
  font-size: 8px;
  line-height: 10px;
}
.viewbar {
  display: grid;
  grid-template-columns: 1fr 1fr;
  padding: 1px 1px 0;
  background: #f0f0f0;
}
.viewbar button {
  height: 21px;
  display: flex;
  align-items: center;
  justify-content: center;
}
.viewbar svg {
  width: 15px;
  height: 15px;
}
.viewbar hr {
  grid-column: 1 / -1;
  margin: 1px 0 3px;
}
.dim {
  color: #999;
}
.blue {
  color: #4868c0;
}
.amber {
  color: #f3bd55;
}
.faded {
  opacity: .5;
}

/* caption over both windows */
.callout {
  position: absolute;
  left: 40.1%;
  bottom: 13px;
  width: 363px;
  height: 188px;
  display: flex;
  align-items: center;
  justify-content: center;
  padding: 0 12px 4px;
  border: 5px solid #d5d8da;
  border-radius: 24px;
  background: linear-gradient(#8db3e4, #4a7cc5 80%, #5583c6);
  box-shadow: 0 0 2px 1px #555, inset 0 0 2px #24508f;
  color: #000;
  font-size: 24px;
  line-height: 27px;
  text-align: center;
}
```
